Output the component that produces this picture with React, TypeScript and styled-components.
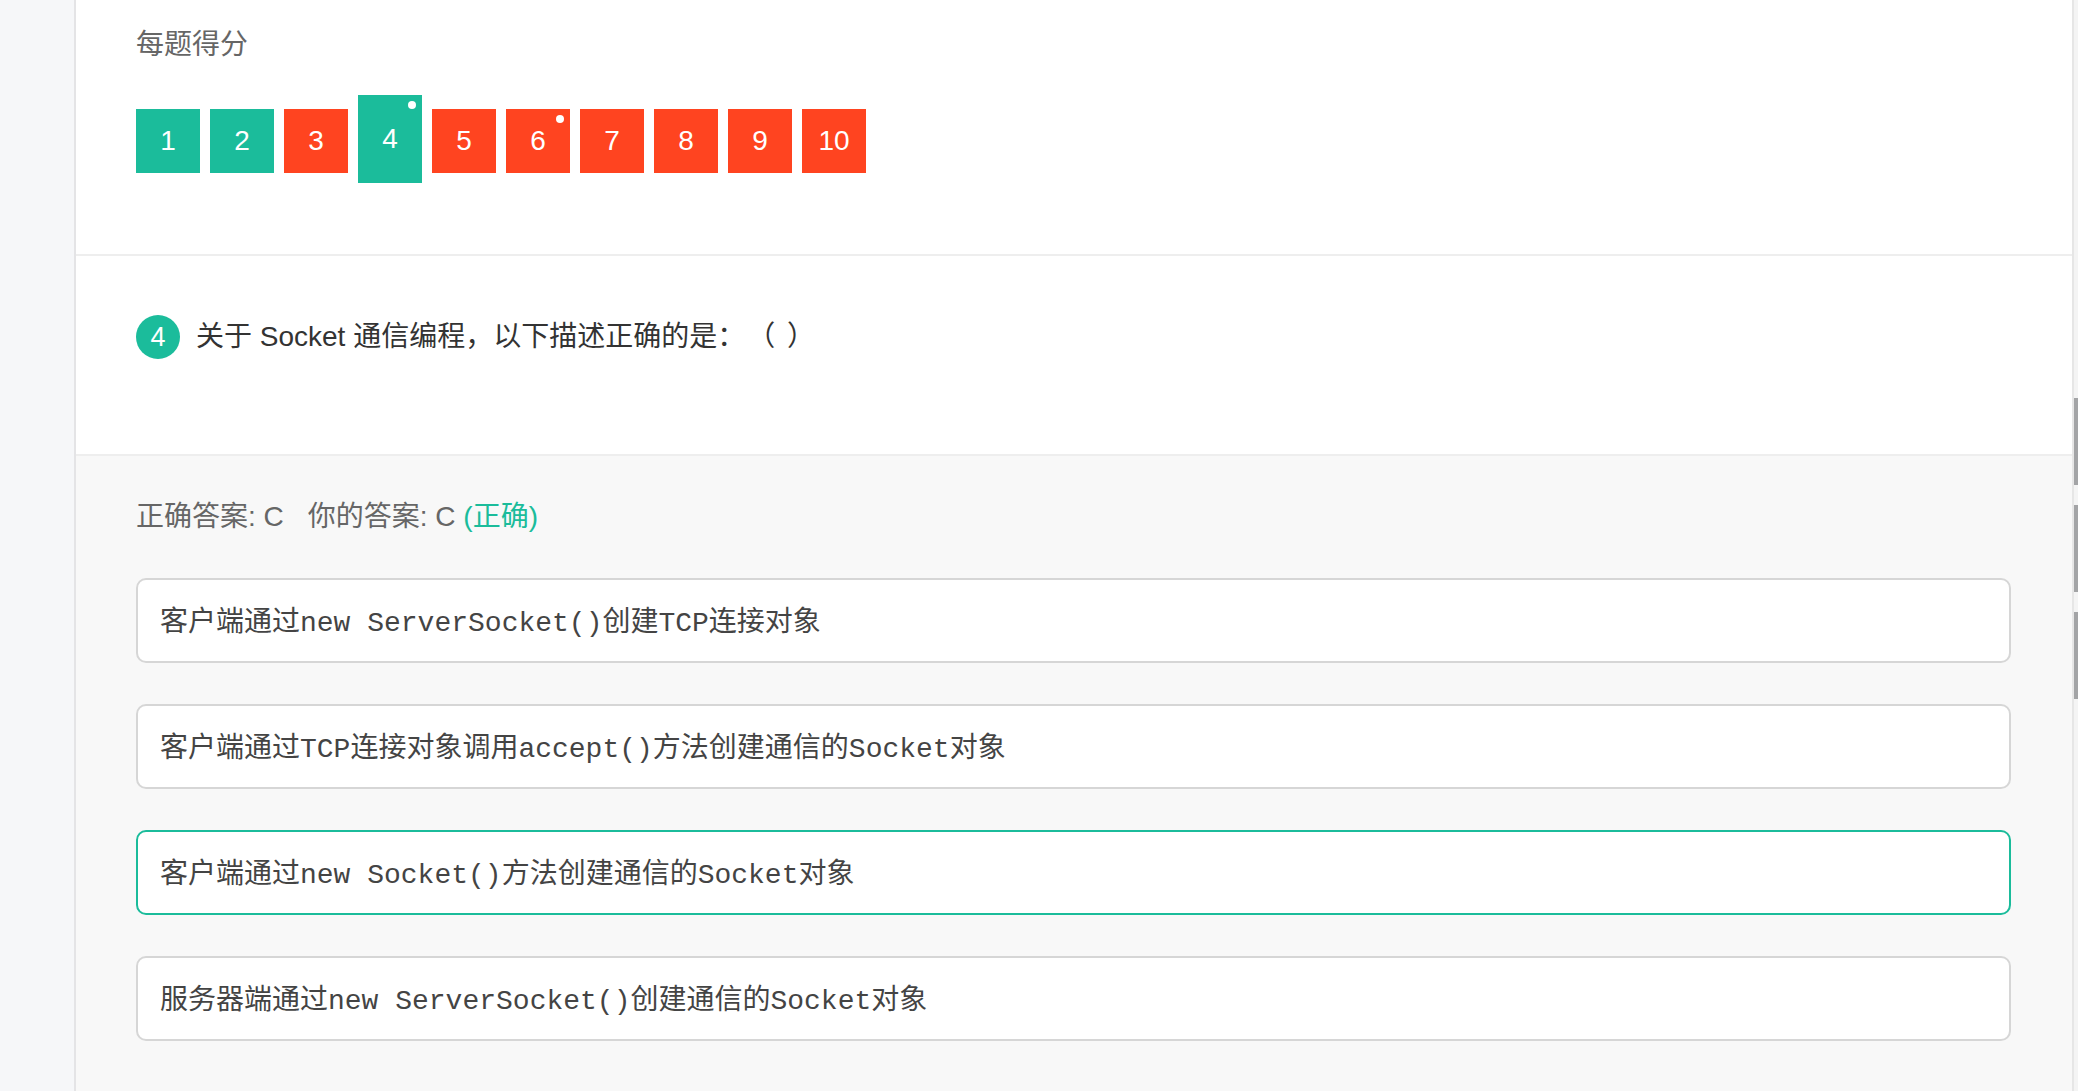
import { FC } from 'react';
import styled, { createGlobalStyle } from 'styled-components';

const GREEN = '#1bbc9b';
const RED = '#ff4420';

interface ScoreItem {
  no: number;
  correct: boolean;
  marked?: boolean;
  current?: boolean;
}

const scores: ScoreItem[] = [
  { no: 1, correct: true },
  { no: 2, correct: true },
  { no: 3, correct: false },
  { no: 4, correct: true, marked: true, current: true },
  { no: 5, correct: false },
  { no: 6, correct: false, marked: true },
  { no: 7, correct: false },
  { no: 8, correct: false },
  { no: 9, correct: false },
  { no: 10, correct: false },
];

const options = [
  { text: '客户端通过new ServerSocket()创建TCP连接对象', chosen: false },
  { text: '客户端通过TCP连接对象调用accept()方法创建通信的Socket对象', chosen: false },
  { text: '客户端通过new Socket()方法创建通信的Socket对象', chosen: true },
  { text: '服务器端通过new ServerSocket()创建通信的Socket对象', chosen: false },
];

const App: FC = () => {
  return (
    <>
      <GlobalStyle />
      <Page>
        <Sidebar />
        <Main>
          <ScoreSection>
            <SectionTitle>每题得分</SectionTitle>
            <ScoreRow>
              {scores.map((s) => (
                <ScoreBox key={s.no} correct={s.correct} current={!!s.current}>
                  {s.no}
                  {s.marked && <Dot />}
                </ScoreBox>
              ))}
            </ScoreRow>
          </ScoreSection>

          <QuestionSection>
            <Badge>4</Badge>
            <QuestionText>
              关于 Socket 通信编程，以下描述正确的是：<Blank>（ ）</Blank>
            </QuestionText>
          </QuestionSection>

          <AnswerSection>
            <AnswerLine>
              正确答案: C<Mine>你的答案: C</Mine> <Right>(正确)</Right>
            </AnswerLine>
            <OptionList>
              {options.map((o) => (
                <OptionBox key={o.text} chosen={o.chosen}>
                  {o.text}
                </OptionBox>
              ))}
            </OptionList>
          </AnswerSection>
        </Main>
        <ScrollRail>
          <Thumb />
          <Thumb />
          <Thumb />
        </ScrollRail>
      </Page>
    </>
  );
};

const GlobalStyle = createGlobalStyle`
  html, body {
    margin: 0;
    padding: 0;
    height: 100%;
    overflow: hidden;
    background: #fff;
  }
  #root {
    height: 100%;
  }
  * {
    box-sizing: border-box;
  }
`;

const Page = styled.div`
  display: flex;
  height: 100vh;
  font-family: 'Liberation Sans', 'Noto Sans CJK SC', sans-serif;
`;

const Sidebar = styled.div`
  width: 76px;
  flex-shrink: 0;
  background: #f6f7f9;
  border-right: 2px solid #e4e4e6;
`;

const Main = styled.div`
  flex: 1;
  display: flex;
  flex-direction: column;
  border-right: 2px solid #e6e6e6;
  background: #fff;
  min-width: 0;
`;

const ScoreSection = styled.section`
  padding: 25px 60px 71px;
  border-bottom: 2px solid #eeeeee;
`;

const SectionTitle = styled.h3`
  margin: 0;
  font-size: 28px;
  line-height: 40px;
  font-weight: normal;
  color: #666;
`;

const ScoreRow = styled.div`
  display: flex;
  align-items: flex-start;
  gap: 10px;
  margin-top: 44px;
`;

const ScoreBox = styled.div<{ correct: boolean; current: boolean }>`
  position: relative;
  width: 64px;
  height: ${({ current }) => (current ? '88px' : '64px')};
  margin-top: ${({ current }) => (current ? '-14px' : '0')};
  background: ${({ correct }) => (correct ? GREEN : RED)};
  color: #fff;
  font-size: 28px;
  display: flex;
  align-items: center;
  justify-content: center;
`;

const Dot = styled.span`
  position: absolute;
  top: 6px;
  right: 6px;
  width: 8px;
  height: 8px;
  border-radius: 50%;
  background: #fff;
`;

const QuestionSection = styled.section`
  display: flex;
  align-items: center;
  padding: 59px 60px 95px;
  border-bottom: 2px solid #eeeeee;
`;

const Badge = styled.span`
  width: 44px;
  height: 44px;
  border-radius: 50%;
  background: ${GREEN};
  color: #fff;
  font-size: 27px;
  display: flex;
  align-items: center;
  justify-content: center;
  flex-shrink: 0;
`;

const QuestionText = styled.p`
  margin: 0 0 0 16px;
  font-size: 28px;
  line-height: 44px;
  color: #333;
`;

const Blank = styled.span`
  margin-left: 16px;
  letter-spacing: 2px;
`;

const AnswerSection = styled.section`
  flex: 1;
  background: #f8f8f8;
  padding: 41px 61px 0 60px;
`;

const AnswerLine = styled.div`
  font-size: 28px;
  line-height: 40px;
  color: #666;
`;

const Mine = styled.span`
  margin-left: 24px;
`;

const Right = styled.span`
  color: ${GREEN};
`;

const OptionList = styled.div`
  display: flex;
  flex-direction: column;
  gap: 41px;
  margin-top: 41px;
`;

const OptionBox = styled.div<{ chosen: boolean }>`
  height: 85px;
  display: flex;
  align-items: center;
  padding: 0 22px 4px;
  background: #fff;
  border: 2px solid ${({ chosen }) => (chosen ? GREEN : '#d6d6d6')};
  border-radius: 10px;
  font-family: 'Liberation Mono', 'Noto Sans CJK SC', monospace;
  font-size: 28px;
  color: #444;
  white-space: pre;
`;

const ScrollRail = styled.div`
  width: 4px;
  flex-shrink: 0;
  display: flex;
  flex-direction: column;
  gap: 20px;
  padding-top: 398px;
  background: #f4f4f4;
`;

const Thumb = styled.div`
  height: 87px;
  background: #a3a4a6;
`;

export default App;
